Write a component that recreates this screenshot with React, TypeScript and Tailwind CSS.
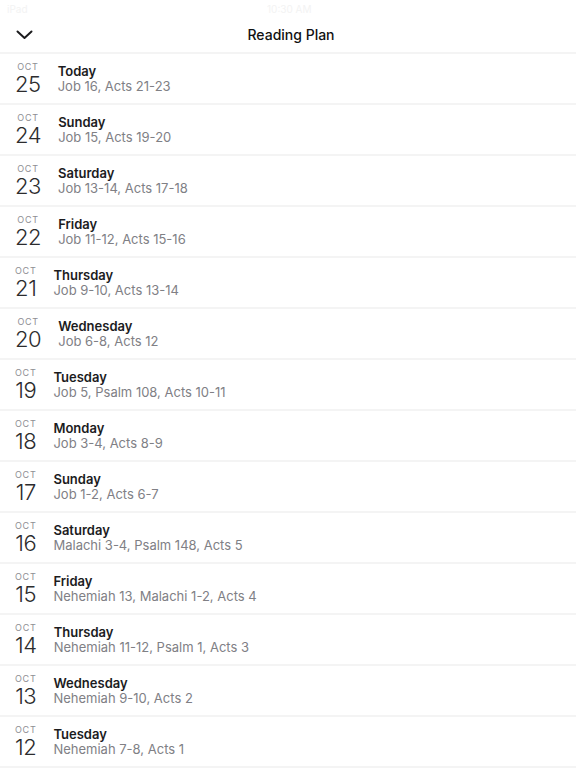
const days = [
  { d: '25', title: 'Today', text: 'Job 16, Acts 21-23' },
  { d: '24', title: 'Sunday', text: 'Job 15, Acts 19-20' },
  { d: '23', title: 'Saturday', text: 'Job 13-14, Acts 17-18' },
  { d: '22', title: 'Friday', text: 'Job 11-12, Acts 15-16' },
  { d: '21', title: 'Thursday', text: 'Job 9-10, Acts 13-14' },
  { d: '20', title: 'Wednesday', text: 'Job 6-8, Acts 12' },
  { d: '19', title: 'Tuesday', text: 'Job 5, Psalm 108, Acts 10-11' },
  { d: '18', title: 'Monday', text: 'Job 3-4, Acts 8-9' },
  { d: '17', title: 'Sunday', text: 'Job 1-2, Acts 6-7' },
  { d: '16', title: 'Saturday', text: 'Malachi 3-4, Psalm 148, Acts 5' },
  { d: '15', title: 'Friday', text: 'Nehemiah 13, Malachi 1-2, Acts 4' },
  { d: '14', title: 'Thursday', text: 'Nehemiah 11-12, Psalm 1, Acts 3' },
  { d: '13', title: 'Wednesday', text: 'Nehemiah 9-10, Acts 2' },
  { d: '12', title: 'Tuesday', text: 'Nehemiah 7-8, Acts 1' },
];

export default function App() {
  return (
    <div className="h-[768px] overflow-hidden bg-white font-['Inter','Liberation_Sans',sans-serif] text-[#1c1c1e]">
      {/* status bar */}
      <div className="relative h-[17px] text-[10px] text-[#f3f3f3]">
        <span className="absolute left-[7px] top-[2px]">iPad</span>
        <span className="absolute left-[267px] top-[2px]">10:30 AM</span>
      </div>

      <div className="relative flex h-[37px] items-center justify-center border-b-2 border-[#f4f4f4]">
        <button className="absolute left-[16px] top-[13px]">
          <svg width="17" height="10" viewBox="0 0 17 10" fill="none">
            <path d="M1.5 1.5 L8.5 8 L15.5 1.5" stroke="#1c1c1e" strokeWidth="2" strokeLinecap="round" strokeLinejoin="round" />
          </svg>
        </button>
        <h1 className="ml-[6px] text-[14px] font-medium text-[#111]">Reading Plan</h1>
      </div>

      <ul>
        {days.map((r, i) => (
          <li key={i} className="flex h-[51px] items-center gap-[17px] border-b-2 border-[#f4f4f4] pl-[15px]">
            <div className="flex flex-col items-center">
              <span className="text-[9px] leading-[9px] tracking-[0.08em] text-[#8e8e93]">OCT</span>
              <span className="mt-[2px] text-[22px] font-light leading-[22px] tracking-[-0.02em] text-[#2c2c2e]">{r.d}</span>
            </div>
            <div className="flex flex-col">
              <span className="text-[13px] font-semibold leading-[16px] text-[#1c1c1e]">{r.title}</span>
              <span className="text-[13px] leading-[15px] text-[#808085]">{r.text}</span>
            </div>
          </li>
        ))}
      </ul>
    </div>
  );
}
